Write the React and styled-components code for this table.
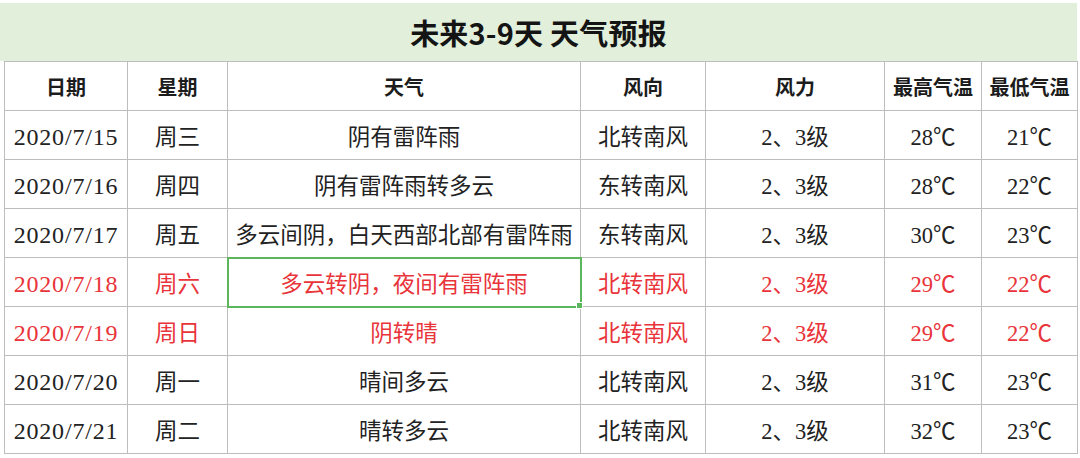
import React from 'react';
import styled, { createGlobalStyle } from 'styled-components';

const GlobalStyle = createGlobalStyle`
  html, body {
    margin: 0;
    padding: 0;
    background: #ffffff;
  }
  body {
    font-family: "Liberation Serif", "Noto Sans CJK SC", serif;
  }
`;

const Page = styled.div`
  width: 1080px;
  height: 458px;
  overflow: hidden;
  padding-top: 3px;
  box-sizing: border-box;
  background: #ffffff;
`;

const Sheet = styled.div`
  width: 1074px;
  margin-left: 4px;
`;

const Title = styled.div`
  height: 58px;
  margin-left: -4px;
  width: 1077px;
  background: #e2efda;
  display: flex;
  align-items: center;
  justify-content: center;
  font-family: "Noto Sans CJK SC", "Liberation Sans", sans-serif;
  font-weight: 700;
  font-size: 29px;
  color: #141414;
  letter-spacing: 0.2px;
`;

const Grid = styled.div`
  display: grid;
  grid-template-columns: 123px 100px 353px 125px 179px 97px 96px;
  grid-auto-rows: 49px;
  border-left: 1px solid #bdbdbd;
  border-top: 1px solid #bdbdbd;
`;

const HeadCell = styled.div`
  box-sizing: border-box;
  border-right: 1px solid #bdbdbd;
  border-bottom: 1px solid #bdbdbd;
  display: flex;
  align-items: center;
  justify-content: center;
  font-family: "Noto Sans CJK SC", serif;
  font-weight: 700;
  font-size: 20px;
  color: #1c1c1c;
`;

const Cell = styled.div`
  position: relative;
  box-sizing: border-box;
  border-right: 1px solid #bdbdbd;
  border-bottom: 1px solid #bdbdbd;
  display: flex;
  align-items: center;
  justify-content: center;
  white-space: nowrap;
  font-family: "Liberation Serif", "Noto Sans CJK SC", serif;
  font-size: ${({ $date }) => ($date ? '24px' : '22.5px')};
  padding-top: ${({ $date }) => ($date ? '4px' : '0')};
  color: ${({ $red }) => ($red ? '#e8343a' : '#222222')};
  letter-spacing: ${({ $date }) => ($date ? '0.8px' : '0')};
  outline: ${({ $selected }) => ($selected ? '2px solid #5cb65c' : 'none')};
  outline-offset: -1px;
  z-index: ${({ $selected }) => ($selected ? 2 : 0)};
`;

const FillHandle = styled.span`
  position: absolute;
  right: -3px;
  bottom: -3px;
  width: 5px;
  height: 5px;
  background: #5cb65c;
  border: 1px solid #ffffff;
`;

const headers = ['日期', '星期', '天气', '风向', '风力', '最高气温', '最低气温'];

const rows = [
  { date: '2020/7/15', day: '周三', weather: '阴有雷阵雨', wind: '北转南风', force: '2、3级', high: '28℃', low: '21℃' },
  { date: '2020/7/16', day: '周四', weather: '阴有雷阵雨转多云', wind: '东转南风', force: '2、3级', high: '28℃', low: '22℃' },
  { date: '2020/7/17', day: '周五', weather: '多云间阴，白天西部北部有雷阵雨', wind: '东转南风', force: '2、3级', high: '30℃', low: '23℃' },
  { date: '2020/7/18', day: '周六', weather: '多云转阴，夜间有雷阵雨', wind: '北转南风', force: '2、3级', high: '29℃', low: '22℃', red: true, selected: true },
  { date: '2020/7/19', day: '周日', weather: '阴转晴', wind: '北转南风', force: '2、3级', high: '29℃', low: '22℃', red: true },
  { date: '2020/7/20', day: '周一', weather: '晴间多云', wind: '北转南风', force: '2、3级', high: '31℃', low: '23℃' },
  { date: '2020/7/21', day: '周二', weather: '晴转多云', wind: '北转南风', force: '2、3级', high: '32℃', low: '23℃' },
];

const App = () => (
  <>
    <GlobalStyle />
    <Page>
      <Sheet>
        <Title>未来3-9天 天气预报</Title>
        <Grid>
          {headers.map((h) => (
            <HeadCell key={h}>{h}</HeadCell>
          ))}
          {rows.map((r) => (
            <React.Fragment key={r.date}>
              <Cell $red={r.red} $date>{r.date}</Cell>
              <Cell $red={r.red}>{r.day}</Cell>
              <Cell $red={r.red} $selected={r.selected}>
                {r.weather}
                {r.selected && <FillHandle />}
              </Cell>
              <Cell $red={r.red}>{r.wind}</Cell>
              <Cell $red={r.red}>{r.force}</Cell>
              <Cell $red={r.red}>{r.high}</Cell>
              <Cell $red={r.red}>{r.low}</Cell>
            </React.Fragment>
          ))}
        </Grid>
      </Sheet>
    </Page>
  </>
);

export default App;
